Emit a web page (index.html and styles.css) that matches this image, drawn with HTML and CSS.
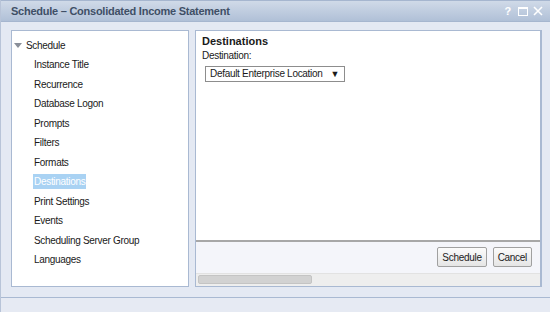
FILE: index.html
```html
<!DOCTYPE html>
<html lang="en">
<head>
  <meta charset="UTF-8">
  <title>Schedule</title>
  <link rel="stylesheet" href="styles.css">
</head>
<body>
  <div class="dialog">
    <!-- title bar -->
    <div class="titlebar">
      <span class="title">Schedule – Consolidated Income Statement</span>
      <div class="tools">
        <span class="tool-help">?</span>
        <svg width="10" height="9" viewBox="0 0 10 9"><rect x="0.5" y="0.5" width="9" height="8" fill="none" stroke="#fff" stroke-width="1"/><rect x="0" y="0" width="10" height="2" fill="#fff"/></svg>
        <svg width="10" height="10" viewBox="0 0 10 10"><path d="M1 1 L9 9 M9 1 L1 9" stroke="#fff" stroke-width="1.6"/></svg>
      </div>
    </div>

    <div class="main">
      <!-- navigation tree -->
      <div class="tree">
        <div class="node-root"><span class="arrow"></span>Schedule</div>
        <ul class="nodes">
          <li>Instance Title</li>
          <li>Recurrence</li>
          <li>Database Logon</li>
          <li>Prompts</li>
          <li>Filters</li>
          <li>Formats</li>
          <li><span class="selected">Destinations</span></li>
          <li>Print Settings</li>
          <li>Events</li>
          <li>Scheduling Server Group</li>
          <li>Languages</li>
        </ul>
      </div>

      <!-- content pane -->
      <div class="pane">
        <div class="pane-body">
          <div class="heading">Destinations</div>
          <div class="label">Destination:</div>
          <div class="select">Default Enterprise Location <span class="caret">▼</span></div>
        </div>
        <div class="actions">
          <button>Schedule</button>
          <button>Cancel</button>
        </div>
        <div class="scrollbar"><div class="thumb"></div></div>
      </div>
    </div>

    <div class="statusbar"></div>
  </div>
</body>
</html>
```

FILE: styles.css
```css
html, body { margin: 0; padding: 0; }
body {
  width: 550px;
  height: 312px;
  overflow: hidden;
  font-family: "Liberation Sans", sans-serif;
  font-size: 10px;
  letter-spacing: -0.3px;
  color: #1a1a1a;
  background: #e4e9f3;
}
.dialog {
  height: 312px;
  display: flex;
  flex-direction: column;
  border-left: 1px solid #b8c4d8;
  box-sizing: border-box;
}
.titlebar {
  height: 22px;
  flex: none;
  display: flex;
  align-items: center;
  justify-content: space-between;
  padding: 0 7px 0 10px;
  background: linear-gradient(#d0dae8, #b0c0d7);
  border-top: 1px solid #a6b6cf;
  border-bottom: 1px solid #a6b6cf;
  box-sizing: border-box;
}
.title {
  font-weight: bold;
  font-size: 11px;
  letter-spacing: -0.25px;
  color: #3f4f66;
}
.tools { display: flex; align-items: center; gap: 5px; }
.tool-help {
  color: #fff;
  font-weight: bold;
  font-size: 11px;
  margin-right: 2px;
}
.main {
  flex: none;
  height: 257px;
  display: flex;
  gap: 6px;
  padding: 8px 8px 0 10px;
}
.tree {
  width: 176px;
  background: #fff;
  border: 1px solid #a9b9d2;
  padding-top: 6px;
}
.node-root {
  display: flex;
  align-items: center;
  height: 16px;
  padding-left: 2px;
  margin-bottom: 2px;
}
.arrow {
  width: 0;
  height: 0;
  border-left: 4px solid transparent;
  border-right: 4px solid transparent;
  border-top: 5px solid #8a8f99;
  margin-right: 4px;
}
.nodes { list-style: none; margin: 0; padding: 0 0 0 22px; }
.nodes li { height: 19.5px; line-height: 19.5px; }
.selected {
  background: #a9d2f3;
  color: #fff;
  padding: 2px 1px;
  margin-left: -1px;
}
.pane {
  flex: 1;
  display: flex;
  flex-direction: column;
  border: 1px solid #a9b9d2;
  border-right-width: 2px;
  background: #f4f5fa;
}
.pane-body {
  flex: 1;
  background: #fff;
  border-bottom: 2px solid #a7a7a7;
  padding: 4px 5px 3px 6px;
}
.heading { font-weight: bold; font-size: 11px; letter-spacing: 0; line-height: 13px; }
.label { line-height: 15px; }
.select {
  display: inline-flex;
  align-items: center;
  gap: 8px;
  margin: 3px 0 0 3px;
  height: 14px;
  padding: 0 5px 0 4px;
  border: 1px solid #8d8d8d;
  line-height: 14px;
}
.caret { font-size: 9px; }
.actions {
  display: flex;
  justify-content: flex-end;
  gap: 6px;
  padding: 5px 8px 6px 0;
}
.actions button {
  font-family: "Liberation Sans", sans-serif;
  font-size: 10px;
  letter-spacing: -0.3px;
  height: 20px;
  padding: 0 4px;
  border: 1px solid #a0a0a0;
  border-radius: 2px;
  background: linear-gradient(#fbfbfb, #e5e5e5);
  color: #222;
}
.scrollbar {
  height: 13px;
  background: #eeeeee;
  border-top: 1px solid #e2e2e2;
  padding: 1px 2px;
  box-sizing: border-box;
}
.thumb {
  width: 114px;
  height: 9px;
  background: #d2d2d2;
  border: 1px solid #c4c4c4;
  box-sizing: border-box;
  border-radius: 2px;
}
.statusbar {
  margin-top: 10px;
  flex: 1;
  border-top: 1px solid #a9b9d2;
  background: #e6eaf3;
}
```
